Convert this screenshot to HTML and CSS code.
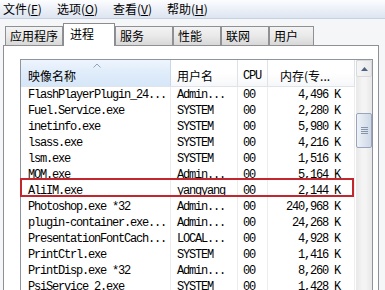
FILE: index.html
```html
<!DOCTYPE html>
<html lang="zh-CN">
<head>
  <meta charset="UTF-8" />
  <title>Windows 任务管理器</title>
  <link rel="stylesheet" href="styles.css">
</head>
<body>
  <div class="window">
    <div class="menubar">
      <span class="menu m-file">文件(<u>F</u>)</span>
      <span class="menu m-opt">选项(<u>O</u>)</span>
      <span class="menu m-view">查看(<u>V</u>)</span>
      <span class="menu">帮助(<u>H</u>)</span>
    </div>

    <div class="tabs">
      <div class="tab t-apps">应用程序</div>
      <div class="tab t-proc active">进程</div>
      <div class="tab t-svc">服务</div>
      <div class="tab t-perf">性能</div>
      <div class="tab t-net">联网</div>
      <div class="tab t-user">用户</div>
    </div>

    <div class="panel">
      <div class="listbox">
        <div class="table">
          <div class="row head">
            <div class="cell sorted">映像名称
              <svg class="sort-arrow" width="8" height="5" viewBox="0 0 8 5"><polyline points="0.5,4.5 4,1 7.5,4.5" fill="none" stroke="#8fa3ba" stroke-width="1"/></svg>
            </div>
            <div class="cell">用户名</div>
            <div class="cell mono">CPU</div>
            <div class="cell mem-head">内存(专...</div>
          </div>
          <div id="rows"></div>
        </div>
        <div class="scrollbar">
          <div class="sb-btn">
            <svg width="7" height="4" viewBox="0 0 7 4"><polygon points="0,4 3.5,0 7,4" fill="#4d6185"/></svg>
          </div>
          <div class="sb-thumb">
            <span></span><span></span><span></span><span></span>
          </div>
          <div class="sb-track"></div>
          <div class="sb-btn"></div>
        </div>
        <div class="highlight"></div>
      </div>
    </div>
  </div>

  <script>
    const processes = [
      ["FlashPlayerPlugin_24...", "Admin...", "00", "4,496 K"],
      ["Fuel.Service.exe", "SYSTEM", "00", "2,280 K"],
      ["inetinfo.exe", "SYSTEM", "00", "5,980 K"],
      ["lsass.exe", "SYSTEM", "00", "4,216 K"],
      ["lsm.exe", "SYSTEM", "00", "1,516 K"],
      ["MOM.exe", "Admin...", "00", "5,164 K"],
      ["AliIM.exe", "yangyang", "00", "2,144 K"],
      ["Photoshop.exe *32", "Admin...", "00", "240,968 K"],
      ["plugin-container.exe...", "Admin...", "00", "24,268 K"],
      ["PresentationFontCach...", "LOCAL...", "00", "4,928 K"],
      ["PrintCtrl.exe", "SYSTEM", "00", "1,416 K"],
      ["PrintDisp.exe *32", "Admin...", "00", "8,260 K"],
      ["PsiService_2.exe", "SYSTEM", "00", "1,428 K"]
    ];

    const rowsDiv = document.getElementById("rows");
    processes.forEach(p => {
      const row = document.createElement("div");
      row.classList.add("row");
      row.innerHTML = `
        <div class="cell">${p[0]}</div>
        <div class="cell">${p[1]}</div>
        <div class="cell">${p[2]}</div>
        <div class="cell mem">${p[3]}</div>`;
      rowsDiv.appendChild(row);
    });
  </script>
</body>
</html>
```

FILE: styles.css
```css
* {
  margin: 0;
  padding: 0;
  box-sizing: border-box;
}

body {
  width: 385px;
  height: 290px;
  overflow: hidden;
  background: #f5f6f7;
  font-family: "Noto Sans CJK SC", sans-serif;
  font-size: 12px;
  color: #000;
}

/* menu bar */
.menubar {
  height: 19px;
  display: flex;
  align-items: center;
  padding-left: 3px;
  background: linear-gradient(#fcfdfe, #e9eef6 60%, #dce5f1);
  border-bottom: 1px solid #c5d0e0;
  line-height: 18px;
}

.menu {
  white-space: nowrap;
}

.m-file { width: 54px; }
.m-opt { width: 56px; }
.m-view { width: 54px; }

.menu u {
  text-decoration: underline;
  text-underline-offset: 1px;
}

/* tabs */
.tabs {
  height: 26px;
  display: flex;
  align-items: flex-end;
  padding-left: 5px;
  position: relative;
  z-index: 1;
}

.tab {
  height: 19px;
  line-height: 17px;
  padding-left: 4px;
  border: 1px solid #8e9094;
  border-bottom: none;
  background: linear-gradient(#f3f3f3, #e9e9e9 50%, #d8d8d8);
  white-space: nowrap;
}

.tab.active {
  height: 23px;
  padding-left: 6px;
  line-height: 19px;
  background: #fff;
  margin-bottom: -1px;
  border-color: #8a8c90;
}

.t-apps { width: 58px; }
.t-proc { width: 52px; }
.t-svc { width: 58px; }
.t-perf { width: 48px; }
.t-net { width: 48px; }
.t-user { width: 45px; }

/* tab panel */
.panel {
  margin-left: 3px;
  width: 376px;
  height: 260px;
  background: #fff;
  border: 1px solid #8e9094;
  border-bottom: none;
  padding: 13px 0 0 16px;
}

.listbox {
  position: relative;
  width: 353px;
  height: 260px;
  border: 1px solid #8f959e;
  display: flex;
}

.table {
  width: 334px;
}

.row {
  display: grid;
  grid-template-columns: 150px 67px 30px 87px;
  height: 16px;
  line-height: 16px;
  font-family: "Liberation Mono", monospace;
  font-size: 12px;
  letter-spacing: -1.2px;
  white-space: nowrap;
}

.row .cell {
  border-right: 1px solid #ededed;
  padding-left: 6px;
  overflow: hidden;
}

.row .cell:first-child {
  padding-left: 7px;
}

.row .cell:nth-child(3) {
  padding-left: 5px;
}

.row .mem {
  text-align: right;
  padding-right: 14px;
}

.row.head {
  height: 27px;
  line-height: 16px;
  font-family: "Noto Sans CJK SC", sans-serif;
  letter-spacing: 0;
  border-bottom: 1px solid #e0e3e8;
  background: linear-gradient(#fff, #fff 50%, #f6f7f9);
}

.row.head .cell {
  padding-top: 8px;
  border-right: 1px solid #dfe3e8;
}

.row.head .cell.mono {
  font-family: "Liberation Mono", monospace;
  letter-spacing: -1.2px;
}

.row.head .sorted {
  position: relative;
  background: linear-gradient(#eef5fd, #dfecfa 50%, #d6e7f8);
  border-right-color: #c8d8ea;
}

.row.head .mem-head {
  padding-left: 12px;
}

.sort-arrow {
  position: absolute;
  left: 72px;
  top: 3px;
}

/* scrollbar */
.scrollbar {
  width: 17px;
  margin-left: 1px;
  display: flex;
  flex-direction: column;
  background: linear-gradient(to right, #e8e8e8, #f4f4f4 40%, #f4f4f4 60%, #e8e8e8);
}

.sb-btn {
  height: 17px;
  display: flex;
  align-items: center;
  justify-content: center;
  border: 1px solid #d7d9dc;
  border-radius: 2px;
  background: linear-gradient(to right, #f6f6f6, #e9e9e9);
}

.sb-thumb {
  margin-top: 36px;
  height: 35px;
  border: 1px solid #99a6b9;
  border-radius: 2px;
  background: linear-gradient(to right, #eef2f7, #dde5ef 50%, #cdd8e6);
  display: flex;
  flex-direction: column;
  align-items: center;
  justify-content: center;
  gap: 1px;
}

.sb-thumb span {
  width: 7px;
  height: 1px;
  background: #8594aa;
}

.sb-track {
  height: 153px;
}

/* annotation box around the AliIM row */
.highlight {
  position: absolute;
  left: -1px;
  top: 118px;
  width: 334px;
  height: 19px;
  border: 2px solid #c1272d;
}
```
